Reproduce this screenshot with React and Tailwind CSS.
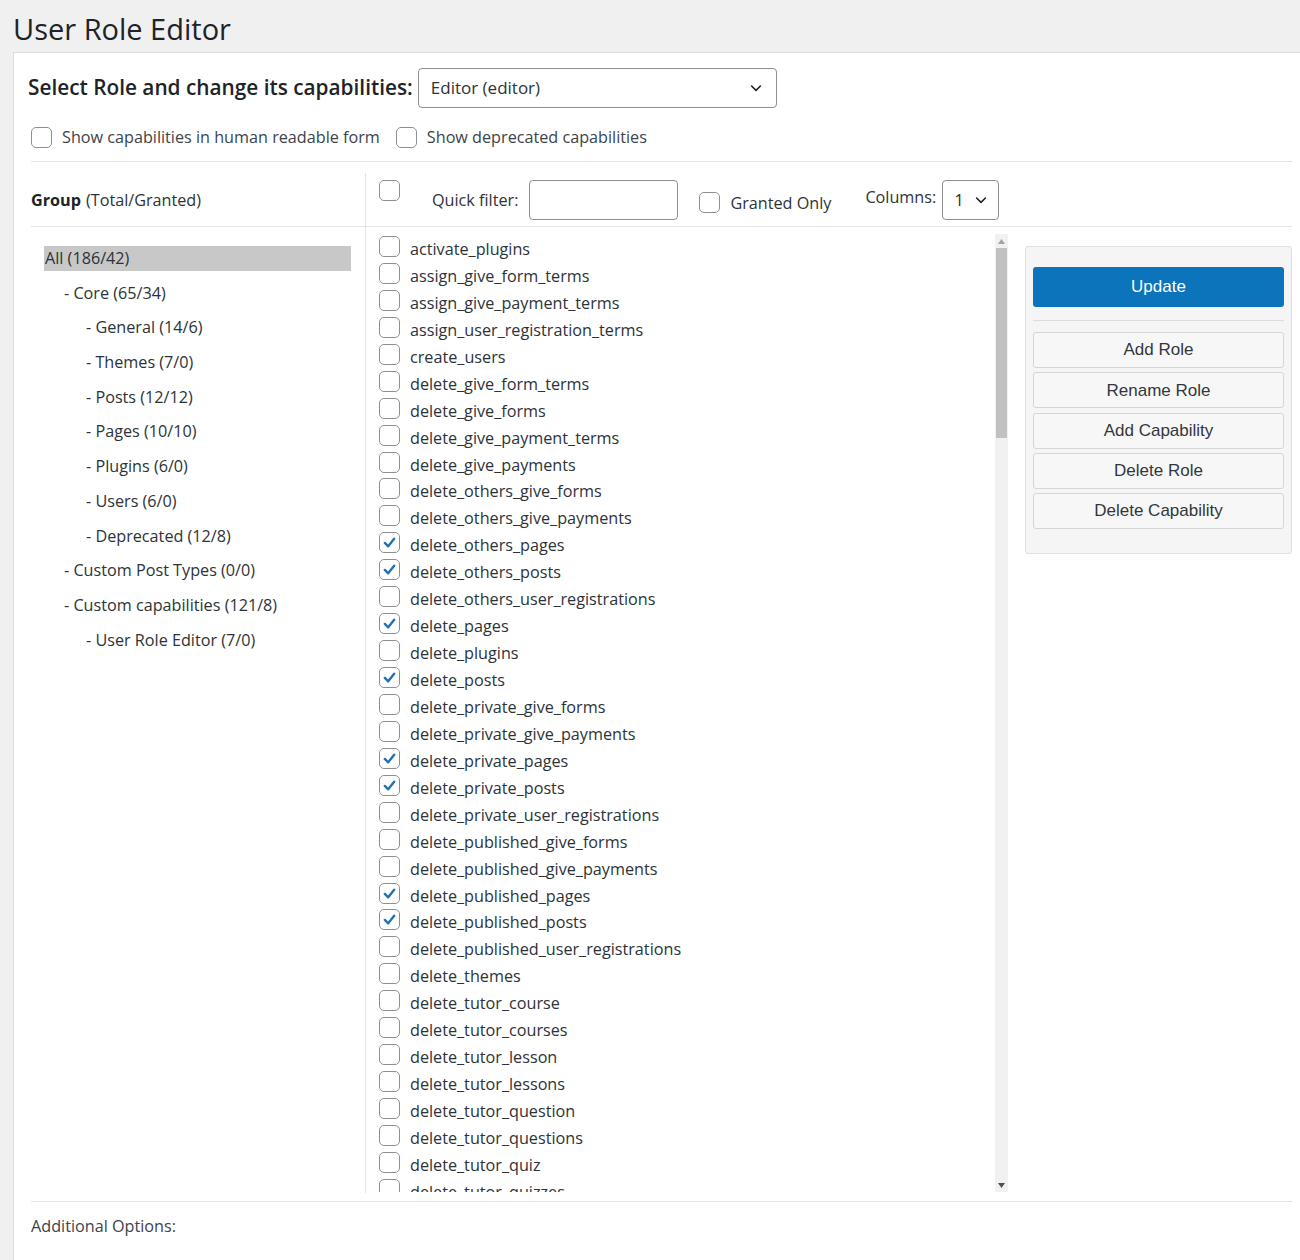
import React from "react";

const caps = [
  ["activate_plugins", false],
  ["assign_give_form_terms", false],
  ["assign_give_payment_terms", false],
  ["assign_user_registration_terms", false],
  ["create_users", false],
  ["delete_give_form_terms", false],
  ["delete_give_forms", false],
  ["delete_give_payment_terms", false],
  ["delete_give_payments", false],
  ["delete_others_give_forms", false],
  ["delete_others_give_payments", false],
  ["delete_others_pages", true],
  ["delete_others_posts", true],
  ["delete_others_user_registrations", false],
  ["delete_pages", true],
  ["delete_plugins", false],
  ["delete_posts", true],
  ["delete_private_give_forms", false],
  ["delete_private_give_payments", false],
  ["delete_private_pages", true],
  ["delete_private_posts", true],
  ["delete_private_user_registrations", false],
  ["delete_published_give_forms", false],
  ["delete_published_give_payments", false],
  ["delete_published_pages", true],
  ["delete_published_posts", true],
  ["delete_published_user_registrations", false],
  ["delete_themes", false],
  ["delete_tutor_course", false],
  ["delete_tutor_courses", false],
  ["delete_tutor_lesson", false],
  ["delete_tutor_lessons", false],
  ["delete_tutor_question", false],
  ["delete_tutor_questions", false],
  ["delete_tutor_quiz", false],
  ["delete_tutor_quizzes", false],
];

const groups = [
  { label: "All (186/42)", indent: 0, active: true },
  { label: "- Core (65/34)", indent: 1 },
  { label: "- General (14/6)", indent: 2 },
  { label: "- Themes (7/0)", indent: 2 },
  { label: "- Posts (12/12)", indent: 2 },
  { label: "- Pages (10/10)", indent: 2 },
  { label: "- Plugins (6/0)", indent: 2 },
  { label: "- Users (6/0)", indent: 2 },
  { label: "- Deprecated (12/8)", indent: 2 },
  { label: "- Custom Post Types (0/0)", indent: 1 },
  { label: "- Custom capabilities (121/8)", indent: 1 },
  { label: "- User Role Editor (7/0)", indent: 2 },
];

const actions = ["Add Role", "Rename Role", "Add Capability", "Delete Role", "Delete Capability"];

const Checkbox = ({ checked }) => (
  <span className="flex items-center justify-center w-[21px] h-[21px] shrink-0 bg-white border border-[#8c8f94] rounded-[5px]">
    {checked && (
      <svg width="17" height="17" viewBox="0 0 20 20">
        <path d="M4.5 10.5 L8.5 14.5 L15.5 5.5" fill="none" stroke="#2271b1" strokeWidth="2.8" strokeLinecap="round" strokeLinejoin="round" />
      </svg>
    )}
  </span>
);

const Chevron = () => (
  <svg width="16" height="16" viewBox="0 0 20 20">
    <path d="M4.5 7.5 L10 13 L15.5 7.5" fill="none" stroke="#1d2327" strokeWidth="2" strokeLinecap="round" strokeLinejoin="round" />
  </svg>
);

const App = () => {
  return (
    <div className="min-h-[1260px] bg-[#f0f0f1] text-[#2c3338] font-['Open_Sans',sans-serif] overflow-hidden">
      <h1 className="px-[13px] pt-[9px] h-[52px] text-[29px] leading-[40px] font-normal text-[#1d2327]">User Role Editor</h1>

      <div className="ml-[13px] bg-white border border-[#dcdcde] border-r-0 pr-2 h-[1210px]">
        <div className="flex items-center pl-[14px] pt-[14px] h-[55px]">
          <span className="text-[20.8px] font-semibold text-[#1d2327] mr-[5px]">Select Role and change its capabilities:</span>
          <div className="flex items-center justify-between w-[359px] h-[40px] px-[12px] border border-[#8c8f94] rounded-[4px] text-[17px]">
            <span>Editor (editor)</span>
            <Chevron />
          </div>
        </div>

        <div className="flex items-center gap-[10px] pl-[17px] pt-[5px] h-[53px] text-[16.2px] text-[#3c434a]">
          <Checkbox />
          <span className="mr-[6px]">Show capabilities in human readable form</span>
          <Checkbox />
          <span>Show deprecated capabilities</span>
        </div>

        <div className="ml-[17px] border-t border-[#e2e4e7]">
          <div className="flex mt-[11px] h-[54px] border-b border-[#e2e4e7]">
            <div className="flex items-center w-[335px] border-r border-[#e2e4e7] text-[16.2px] pt-[2px]">
              <span className="font-bold text-[#1d2327] mr-[5px]">Group</span>
              <span>(Total/Granted)</span>
            </div>
            <div className="flex items-start pl-[13px] pt-[7px]">
              <Checkbox />
              <span className="ml-[32px] mt-[8px] text-[16.2px]">Quick filter:</span>
              <div className="ml-[11px] w-[149px] h-[40px] border border-[#8c8f94] rounded-[4px]" />
              <div className="flex items-center ml-[21px] mt-[9px] gap-[10px]">
                <Checkbox />
                <span className="text-[16.2px] mt-[2px]">Granted Only</span>
              </div>
              <span className="ml-[34px] mt-[5px] text-[16.2px]">Columns:</span>
              <div className="flex items-center justify-between ml-[6px] w-[57px] h-[40px] pl-[11px] pr-[9px] border border-[#8c8f94] rounded-[4px] text-[17px]">
                <span>1</span>
                <Chevron />
              </div>
            </div>
          </div>

          <div className="flex h-[966px]">
            <div className="w-[335px] border-r border-[#e2e4e7] pt-[19px] pl-[13px] pr-[14px]">
              {groups.map((g) => (
                <div
                  key={g.label}
                  className={
                    "h-[25px] mb-[9.7px] leading-[25px] text-[16.2px] " +
                    (g.active ? "bg-[#c8c8c8] pl-[1px]" : g.indent === 1 ? "pl-[20px]" : "pl-[42px]")
                  }
                >
                  {g.label}
                </div>
              ))}
            </div>

            <div className="flex flex-1 pt-[7px] pb-[1px]">
              <div className="flex-1 overflow-hidden pl-[13px]">
                {caps.map(([name, checked]) => (
                  <div key={name} className="flex items-start h-[26.95px] gap-[10px]">
                    <span className="mt-[2px]">
                      <Checkbox checked={checked} />
                    </span>
                    <span className="text-[16.2px] leading-[26px] mt-[2px]">{name}</span>
                  </div>
                ))}
              </div>

              <div className="flex flex-col w-[13px] bg-[#f1f1f1] ml-[9px]">
                <div className="flex items-center justify-center h-[14px]">
                  <svg width="7" height="5" viewBox="0 0 7 5"><path d="M0 5 L3.5 0 L7 5 Z" fill="#a3a3a3" /></svg>
                </div>
                <div className="h-[190px] mx-[1px] bg-[#c1c1c1]" />
                <div className="flex-1" />
                <div className="flex items-center justify-center h-[14px]">
                  <svg width="7" height="5" viewBox="0 0 7 5"><path d="M0 0 L3.5 5 L7 0 Z" fill="#505050" /></svg>
                </div>
              </div>

              <div className="w-[267px] ml-[17px] pt-[12px]">
                <div className="bg-[#f5f5f5] border border-[#e0e0e0] rounded-[3px] px-[7px] pt-[20px] pb-[24px] font-['Liberation_Sans',Arial,sans-serif]">
                  <button className="w-full h-[40px] bg-[#0c74ba] text-white text-[17px] rounded-[3px]">Update</button>
                  <div className="mt-[13px] mb-[11px] border-t border-[#dcdcde]" />
                  <div className="flex flex-col gap-[4.3px]">
                    {actions.map((a) => (
                      <button key={a} className="w-full h-[36px] bg-[#f7f7f7] border border-[#d5d5d5] rounded-[3px] text-[17px] text-[#32373c]">
                        {a}
                      </button>
                    ))}
                  </div>
                </div>
              </div>
            </div>
          </div>

          <div className="mt-[8px] border-t border-[#e2e4e7] pt-[12px] text-[16.2px] text-[#3c434a]">Additional Options:</div>
        </div>
      </div>
    </div>
  );
};

export default App;
